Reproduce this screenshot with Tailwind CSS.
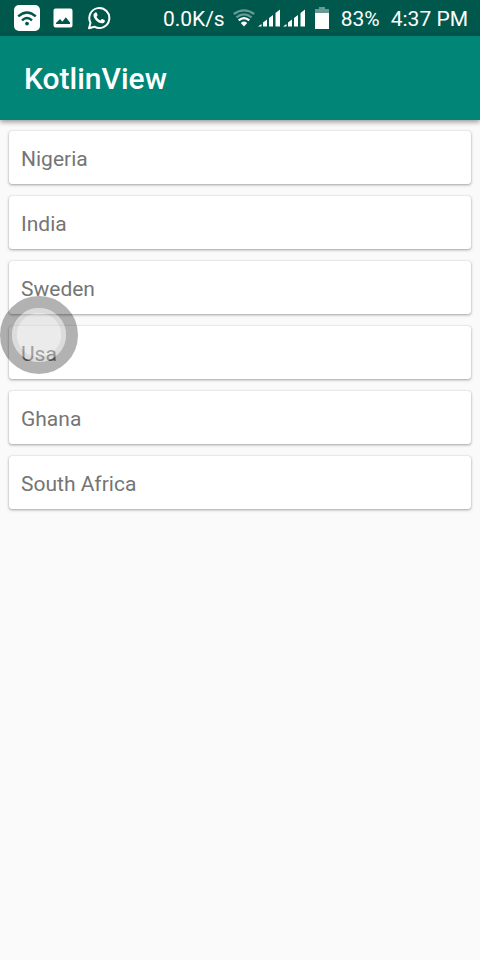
<!DOCTYPE html>
<html lang="en">
<head>
<meta charset="utf-8">
<meta name="viewport" content="width=device-width, initial-scale=1">
<title>KotlinView</title>
<script src="https://cdn.jsdelivr.net/npm/@tailwindcss/browser@4"></script>
</head>
<body class="min-h-screen bg-[#fafafa] font-['Roboto',sans-serif]">
<div class="flex h-9 items-center justify-between bg-[#00574b] pr-3 pl-3.5 text-white">
  <div class="flex items-center">
    <svg class="size-[26px]" viewBox="0 0 26 26" aria-label="Wi-Fi connected">
      <rect width="26" height="26" rx="5" fill="#fff"/>
      <g fill="none" stroke="#00574b" stroke-width="2.400">
        <path d="M4.200 11.400Q13 3.400 21.800 11.400"/>
        <path d="M8 15.400Q13 10.800 18 15.400"/>
      </g>
      <circle cx="13" cy="18.600" r="1.900" fill="#00574b"/>
    </svg>
    <svg class="ml-[13px] size-5" viewBox="0 0 20 20" aria-label="Picture">
      <path fill="#fff" fill-rule="evenodd" d="M2.500.5h15a2 2 0 0 1 2 2v15a2 2 0 0 1-2 2h-15a2 2 0 0 1-2-2v-15a2 2 0 0 1 2-2zM3 16h14v-1.500l-4.200-5.200-3.400 4.500-2.400-2.800L3 15z"/>
    </svg>
    <svg class="ml-3.5 size-6" viewBox="0 0 24 24" aria-label="WhatsApp">
      <path d="M2 22.200l1.500-5.500A10 10 0 1 1 7.400 20.700z" fill="none" stroke="#fff" stroke-width="2" stroke-linejoin="round"/>
      <path fill="#fff" d="M8.300 6.500c.5-.4 1.100-.3 1.400.3l.8 1.900c.2.400.1.700-.2 1l-.8 1c.9 1.700 2.200 2.900 4 3.700l1-1.200c.3-.3.600-.4 1-.2l1.900.9c.4.200.6.500.5 1-.2 1.500-1.700 2.500-3.200 2.300-3.900-.6-7.300-3.700-8.200-7.300-.300-1.400.400-2.700 1.800-3.400z"/>
    </svg>
  </div>
  <div class="flex items-center text-[21px] leading-6 whitespace-pre">
    <span class="pt-0.5">0.0K/s</span>
    <svg class="ml-2 h-[18px] w-[22px]" viewBox="0 0 22 18" aria-label="Wi-Fi signal">
      <g fill="none" stroke="#fff" stroke-width="2.300">
        <path d="M.8 5Q11-2.200 21.200 5" stroke-opacity=".4"/>
        <path d="M3.400 8.300Q11 2.400 18.600 8.300" stroke-opacity=".4"/>
        <path d="M5.700 11.400Q11 6.800 16.300 11.400"/>
      </g>
      <path d="M7.800 13.900Q11 11 14.200 13.900L11 17.600z" fill="#fff"/>
    </svg>
    <svg class="ml-[3px] h-[18px] w-[47px]" viewBox="0 0 47 18" aria-label="Mobile signal, two networks">
      <path fill="#fff" d="M0 17.500l3.500-2.500v2.500zM5 17.500V13.500l4-3v7zM11 17.500V9l4-3v11.500zM17.500 17.500V4L22 .5v17zM25 17.500l3.500-2.500v2.500zM30 17.500V13.500l4-3v7zM36 17.500V9l4-3v11.500zM42.500 17.500V4L47 .5v17z"/>
    </svg>
    <svg class="ml-2.5 h-[22px] w-3.5" viewBox="0 0 14 22" aria-label="Battery">
      <path d="M4 0h6v2h4v4H0V2h4z" fill="#fff" fill-opacity=".4"/>
      <path d="M0 6h14v16H0z" fill="#fff"/>
    </svg>
    <span class="ml-3 pt-0.5">83%</span>
    <span class="ml-[11px] pt-0.5">4:37 PM</span>
  </div>
</div>
<header class="flex h-21 items-center bg-[#008577] px-6 pt-0.5 shadow-[0_2px_5px_rgba(0,0,0,0.4)]">
  <h1 class="text-[30px] leading-9 font-medium text-white">KotlinView</h1>
</header>
<main class="relative px-[9px] pt-[11px]">
  <ul class="flex flex-col gap-3 text-[21px] leading-[25px] text-[#757575]">
    <li class="rounded-[3px] bg-white px-3 pt-4 pb-3 shadow-[0_1px_3px_rgba(0,0,0,0.35),0_0_1px_rgba(0,0,0,0.2)]">Nigeria</li>
    <li class="rounded-[3px] bg-white px-3 pt-4 pb-3 shadow-[0_1px_3px_rgba(0,0,0,0.35),0_0_1px_rgba(0,0,0,0.2)]">India</li>
    <li class="rounded-[3px] bg-white px-3 pt-4 pb-3 shadow-[0_1px_3px_rgba(0,0,0,0.35),0_0_1px_rgba(0,0,0,0.2)]">Sweden</li>
    <li class="rounded-[3px] bg-white px-3 pt-4 pb-3 shadow-[0_1px_3px_rgba(0,0,0,0.35),0_0_1px_rgba(0,0,0,0.2)]">Usa</li>
    <li class="rounded-[3px] bg-white px-3 pt-4 pb-3 shadow-[0_1px_3px_rgba(0,0,0,0.35),0_0_1px_rgba(0,0,0,0.2)]">Ghana</li>
    <li class="rounded-[3px] bg-white px-3 pt-4 pb-3 shadow-[0_1px_3px_rgba(0,0,0,0.35),0_0_1px_rgba(0,0,0,0.2)]">South Africa</li>
  </ul>
  <button type="button" aria-label="Assistive touch" class="absolute top-44 left-0 flex size-[78px] rounded-full border-12 border-black/30">
    <span class="flex size-[54px] rounded-full border-5 border-[#b1b1b1]/45">
      <span class="size-11 rounded-full bg-[#d3d3d3]/45"></span>
    </span>
  </button>
</main>
</body>
</html>
